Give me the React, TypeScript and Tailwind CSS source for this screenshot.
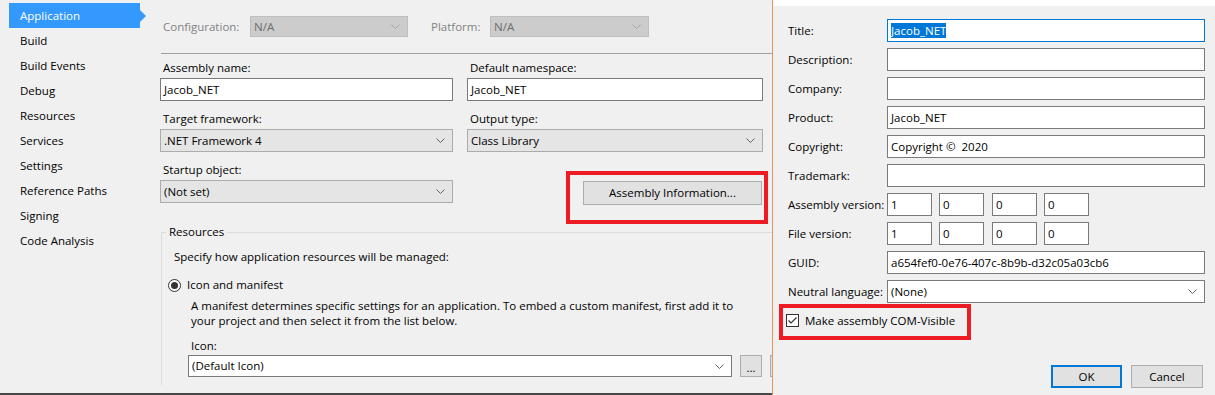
import React from "react";

function Chevron({ color = "#606060" }: { color?: string }) {
  return (
    <svg width="9" height="5" viewBox="0 0 9 5" className="shrink-0">
      <path d="M0.5 0.5L4.5 4.5L8.5 0.5" fill="none" stroke={color} strokeWidth="1" />
    </svg>
  );
}

function Select({
  value,
  className,
  chevron,
}: {
  value: string;
  className: string;
  chevron?: string;
}) {
  return (
    <div className={`flex items-center justify-between border pl-[3px] pr-[7px] ${className}`}>
      <span className="whitespace-nowrap">{value}</span>
      <Chevron color={chevron} />
    </div>
  );
}

function TextBox({ value, className = "" }: { value?: React.ReactNode; className?: string }) {
  return (
    <div
      className={`flex h-[23px] items-center border bg-white pl-[3px] whitespace-pre ${className}`}
    >
      {value}
    </div>
  );
}

function Field({ label, children }: { label: string; children: React.ReactNode }) {
  return (
    <div>
      <div className="mb-[2px] h-[16px] pl-[3px] leading-[16px]">{label}</div>
      {children}
    </div>
  );
}

const navItems = [
  "Application",
  "Build",
  "Build Events",
  "Debug",
  "Resources",
  "Services",
  "Settings",
  "Reference Paths",
  "Signing",
  "Code Analysis",
];

function DialogRow({ label, children }: { label: string; children: React.ReactNode }) {
  return (
    <div className="flex h-[23px] items-center">
      <span className="w-[99px] shrink-0 whitespace-nowrap">{label}</span>
      {children}
    </div>
  );
}

export default function App() {
  return (
    <div className="flex h-[395px] w-[1215px] overflow-hidden bg-[#f0f0f0] font-['Open_Sans',sans-serif] text-[11.5px] leading-[16px] text-black">
      {/* Left: project properties */}
      <div className="flex h-[395px] w-[772px] shrink-0 overflow-hidden border-b-2 border-[#474747]">
        <nav className="w-[160px] shrink-0 pl-[9px] pt-[3px]">
          {navItems.map((item, i) => (
            <div key={item} className="flex h-[25px] items-center">
              {i === 0 ? (
                <>
                  <div className="flex h-full w-[131px] items-center bg-[#3399ff] pl-[11px] text-white">
                    {item}
                  </div>
                  <div className="h-0 w-0 border-y-[6px] border-l-[6px] border-y-transparent border-l-[#3399ff]" />
                </>
              ) : (
                <div className="pl-[11px]">{item}</div>
              )}
            </div>
          ))}
        </nav>

        <div className="flex w-[612px] shrink-0 flex-col pt-[16px]">
          <div className="flex h-[21px] items-center pl-[3px] text-[#838383]">
            <span className="w-[87px] shrink-0">Configuration:</span>
            <Select
              value="N/A"
              className="h-[21px] w-[158px] shrink-0 border-[#bfbfbf] bg-[#cccccc] text-[#6d6d6d]"
              chevron="#a5a5a5"
            />
            <span className="ml-[23px] w-[59px] shrink-0">Platform:</span>
            <Select
              value="N/A"
              className="h-[21px] w-[159px] shrink-0 border-[#bfbfbf] bg-[#cccccc] text-[#6d6d6d]"
              chevron="#a5a5a5"
            />
          </div>

          <div className="ml-[1px] mt-[16px] h-px bg-[#a0a0a0]" />

          <div className="mt-[6px] grid grid-cols-[293px_296px] items-start gap-x-[14px] gap-y-[10px]">
            <Field label="Assembly name:">
              <TextBox value="Jacob_NET" className="border-[#7a7a7a]" />
            </Field>
            <Field label="Default namespace:">
              <TextBox value="Jacob_NET" className="border-[#7a7a7a]" />
            </Field>
            <Field label="Target framework:">
              <Select
                value=".NET Framework 4"
                className="h-[23px] border-[#acacac] bg-[#e5e5e5]"
              />
            </Field>
            <Field label="Output type:">
              <Select value="Class Library" className="h-[23px] border-[#acacac] bg-[#e5e5e5]" />
            </Field>
            <Field label="Startup object:">
              <Select value="(Not set)" className="h-[23px] border-[#acacac] bg-[#e5e5e5]" />
            </Field>
            <div className="flex justify-end pt-[19px] pr-px">
              <div className="relative">
                <button className="flex h-[24px] w-[179px] items-center justify-center border border-[#adadad] bg-[#e1e1e1]">
                  Assembly Information...
                </button>
                <div className="pointer-events-none absolute -bottom-[19px] -left-[17px] -right-[6px] -top-[10px] border-4 border-[#ed1c24]" />
              </div>
            </div>
          </div>

          <fieldset className="mt-[19px] ml-px w-[660px] border-l border-t border-[#dcdcdc] pb-[8px]">
            <legend className="ml-[4px] px-[3px] leading-[16px]">Resources</legend>
            <div className="ml-[12px] mt-[9px] h-[16px]">
              Specify how application resources will be managed:
            </div>
            <div className="ml-[6px] mt-[12px] flex h-[16px] items-center gap-[6px]">
              <div className="flex h-[13px] w-[13px] items-center justify-center rounded-full border border-[#333333] bg-white">
                <div className="h-[7px] w-[7px] rounded-full bg-[#333333]" />
              </div>
              <span>Icon and manifest</span>
            </div>
            <div className="ml-[26px] mt-[5px]">
              <div className="pl-[3px] leading-[15px]">
                A manifest determines specific settings for an application. To embed a custom
                manifest, first add it to
                <br />
                your project and then select it from the list below.
              </div>
              <div className="mt-[10px] h-[16px] pl-[3px]">Icon:</div>
              <div className="mt-px flex items-start">
                <Select
                  value="(Default Icon)"
                  className="h-[22px] w-[544px] shrink-0 border-[#7a7a7a] bg-white"
                />
                <button className="ml-[8px] flex h-[22px] w-[22px] shrink-0 items-center justify-center border border-[#adadad] bg-[#e1e1e1] pt-[3px]">
                  ...
                </button>
                <button className="ml-[8px] h-[22px] w-[60px] shrink-0 border border-[#adadad] bg-[#e1e1e1]" />
              </div>
            </div>
          </fieldset>
        </div>
      </div>

      {/* Orange window edge */}
      <div className="w-px shrink-0 bg-[#e8955a]" />

      {/* Right: Assembly Information dialog */}
      <div className="flex w-[442px] shrink-0 flex-col">
        <div className="h-[6px] bg-white" />
        <div className="mt-[13px] flex flex-col gap-[6px] pl-[15px] pr-[10px]">
          <DialogRow label="Title:">
            <TextBox
              className="flex-1 border-[#0078d7]"
              value={<span className="bg-[#0078d7] leading-[15px] text-white">Jacob_NET</span>}
            />
          </DialogRow>
          <DialogRow label="Description:">
            <TextBox className="flex-1 border-[#7a7a7a]" />
          </DialogRow>
          <DialogRow label="Company:">
            <TextBox className="flex-1 border-[#7a7a7a]" />
          </DialogRow>
          <DialogRow label="Product:">
            <TextBox className="flex-1 border-[#7a7a7a]" value="Jacob_NET" />
          </DialogRow>
          <DialogRow label="Copyright:">
            <TextBox className="flex-1 border-[#7a7a7a]" value={"Copyright \u00a9  2020"} />
          </DialogRow>
          <DialogRow label="Trademark:">
            <TextBox className="flex-1 border-[#7a7a7a]" />
          </DialogRow>
          <DialogRow label="Assembly version:">
            <TextBox className="w-[45px] border-[#7a7a7a]" value="1" />
            <TextBox className="ml-[7px] w-[45px] border-[#7a7a7a]" value="0" />
            <TextBox className="ml-[8px] w-[45px] border-[#7a7a7a]" value="0" />
            <TextBox className="ml-[7px] w-[45px] border-[#7a7a7a]" value="0" />
          </DialogRow>
          <DialogRow label="File version:">
            <TextBox className="w-[45px] border-[#7a7a7a]" value="1" />
            <TextBox className="ml-[7px] w-[45px] border-[#7a7a7a]" value="0" />
            <TextBox className="ml-[8px] w-[45px] border-[#7a7a7a]" value="0" />
            <TextBox className="ml-[7px] w-[45px] border-[#7a7a7a]" value="0" />
          </DialogRow>
          <DialogRow label="GUID:">
            <TextBox
              className="flex-1 border-[#7a7a7a]"
              value="a654fef0-0e76-407c-8b9b-d32c05a03cb6"
            />
          </DialogRow>
          <DialogRow label="Neutral language:">
            <Select
              value="(None)"
              className="h-[23px] flex-1 border-[#7a7a7a] bg-white"
            />
          </DialogRow>
        </div>

        <div className="relative ml-[13px] mt-[11px] flex h-[13px] w-fit items-center gap-[6px]">
          <div className="flex h-[13px] w-[13px] items-center justify-center border border-[#333333] bg-white">
            <svg width="11" height="11" viewBox="0 0 11 11">
              <path d="M1.5 5.5L4 8L9.5 2.5" fill="none" stroke="#333333" strokeWidth="1.2" />
            </svg>
          </div>
          <span className="whitespace-nowrap">Make assembly COM-Visible</span>
          <div className="pointer-events-none absolute -bottom-[13px] -left-[7px] -right-[16px] -top-[10px] border-4 border-[#ed1c24]" />
        </div>

        <div className="mt-[38px] flex justify-end gap-[9px] pr-[12px]">
          <button className="h-[23px] w-[71px] border-2 border-[#0078d7] bg-[#e1e1e1]">OK</button>
          <button className="h-[23px] w-[72px] border border-[#adadad] bg-[#e1e1e1]">Cancel</button>
        </div>
      </div>
    </div>
  );
}
